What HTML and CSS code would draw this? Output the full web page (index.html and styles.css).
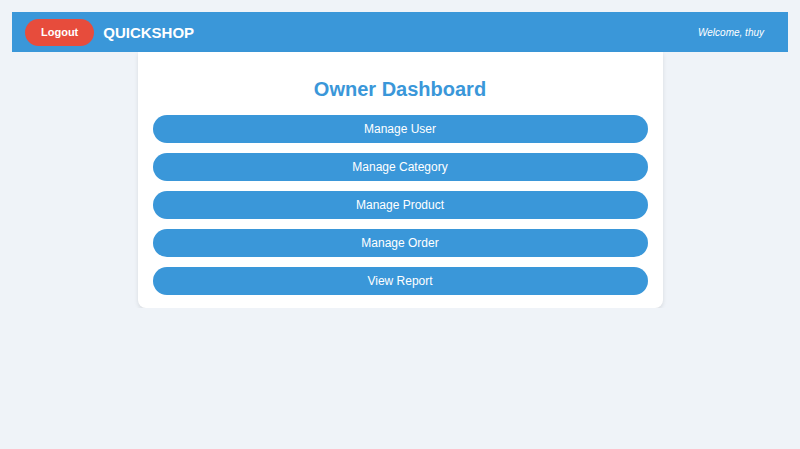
FILE: index.html
```html
<!DOCTYPE html>
<html lang="en">
<head>
    <meta charset="UTF-8">
    <meta name="viewport" content="width=device-width, initial-scale=1.0">
    <title>QuickShop - Owner Dashboard</title>
    <link rel="stylesheet" href="styles.css">
</head>
<body>
    <div class="header">
        <div class="header-left">
            <a href="#" class="logout-btn">Logout</a>
            <span class="brand">QUICKSHOP</span>
        </div>
        <span class="welcome">Welcome, thuy</span>
    </div>

    <div class="dashboard">
        <h2>Owner Dashboard</h2>
        <div class="menu">
            <a href="#" class="menu-btn">Manage User</a>
            <a href="#" class="menu-btn">Manage Category</a>
            <a href="#" class="menu-btn">Manage Product</a>
            <a href="#" class="menu-btn">Manage Order</a>
            <a href="#" class="menu-btn">View Report</a>
        </div>
    </div>
</body>
</html>
```

FILE: styles.css
```css
body {
    font-family: "Liberation Sans", Arial, sans-serif;
    margin: 12px;
    background-color: #eff3f8;
}

.header {
    display: flex;
    justify-content: space-between;
    align-items: center;
    height: 40px;
    padding: 0 24px 0 13px;
    background-color: #3a97d9;
    color: white;
}

.header-left {
    display: flex;
    align-items: center;
    gap: 9px;
}

.logout-btn {
    display: inline-block;
    padding: 0 16px;
    height: 27px;
    line-height: 27px;
    background-color: #e74c3c;
    color: white;
    font-size: 11px;
    font-weight: bold;
    text-decoration: none;
    border-radius: 14px;
}

.brand {
    font-size: 15px;
    font-weight: bold;
}

.welcome {
    font-size: 10px;
    font-style: italic;
}

/* card under the header */
.dashboard {
    box-sizing: border-box;
    width: 525px;
    margin: 0 auto;
    padding: 26px 15px 13px;
    background-color: white;
    border-radius: 0 0 8px 8px;
    box-shadow: 0 2px 4px rgba(0, 0, 0, 0.1);
}

.dashboard h2 {
    margin: 0 0 14px;
    font-size: 20px;
    line-height: 23px;
    text-align: center;
    color: #3a97d9;
}

.menu {
    display: flex;
    flex-direction: column;
    gap: 10px;
}

.menu-btn {
    display: block;
    height: 28px;
    line-height: 28px;
    background-color: #3a97d9;
    color: white;
    font-size: 12px;
    text-align: center;
    text-decoration: none;
    border-radius: 14px;
}
```
